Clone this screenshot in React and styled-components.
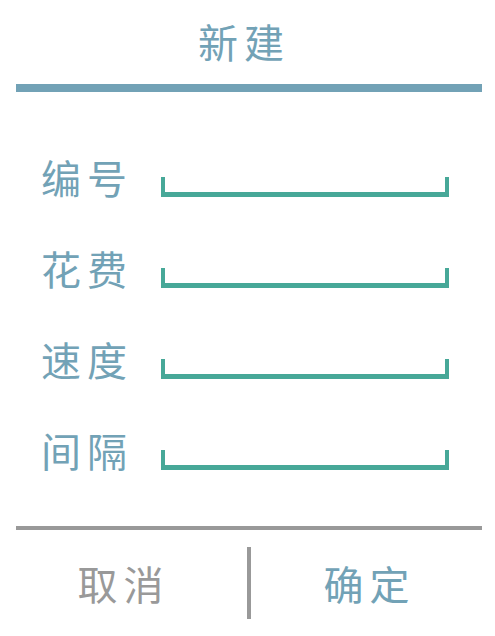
import React from 'react';
import styled, { createGlobalStyle } from 'styled-components';

const GlobalStyle = createGlobalStyle`
  html, body {
    margin: 0;
    padding: 0;
    background: #fff;
  }
  body {
    font-family: "Noto Sans CJK SC", "Noto Sans", sans-serif;
  }
`;

const Dialog = styled.div`
  width: 466px;
  margin: 0 16px;
  display: flex;
  flex-direction: column;
`;

const Header = styled.div`
  padding: 21px 10px 0 0;
  height: 92px;
  box-sizing: border-box;
  text-align: center;
  border-bottom: 8px solid #72a2b6;
  font-size: 40px;
  line-height: 40px;
  letter-spacing: 6px;
  color: #72a2b6;
`;

const Form = styled.div`
  display: flex;
  flex-direction: column;
  gap: 51px;
  padding: 65px 0 0 25px;
  height: 434px;
  box-sizing: border-box;
`;

const Row = styled.div`
  display: flex;
  align-items: flex-end;
`;

const Label = styled.span`
  width: 120px;
  font-size: 40px;
  line-height: 40px;
  letter-spacing: 6px;
  color: #72a2b6;
  white-space: nowrap;
`;

const Field = styled.div`
  width: 288px;
  height: 20px;
  box-sizing: border-box;
  border: 4px solid #47a898;
  border-top: none;
  border-bottom-width: 5px;
`;

const Footer = styled.div`
  border-top: 4px solid #999;
  display: flex;
  align-items: center;
  padding-top: 17px;
`;

const Action = styled.button`
  width: 231px;
  height: 72px;
  box-sizing: border-box;
  border: none;
  background: none;
  padding: 0 ${(p) => (p.$primary ? 0 : 16)}px 0 ${(p) => (p.$primary ? 6 : 0)}px;
  font-family: inherit;
  font-size: 40px;
  line-height: 40px;
  letter-spacing: 6px;
  color: ${(p) => (p.$primary ? '#72a2b6' : '#999')};
  cursor: pointer;
`;

const Divider = styled.div`
  width: 4px;
  height: 72px;
  background: #999;
`;

const fields = ['编号', '花费', '速度', '间隔'];

export default function App() {
  return (
    <>
      <GlobalStyle />
      <Dialog>
        <Header>新建</Header>
        <Form>
          {fields.map((name) => (
            <Row key={name}>
              <Label>{name}</Label>
              <Field />
            </Row>
          ))}
        </Form>
        <Footer>
          <Action>取消</Action>
          <Divider />
          <Action $primary>确定</Action>
        </Footer>
      </Dialog>
    </>
  );
}
